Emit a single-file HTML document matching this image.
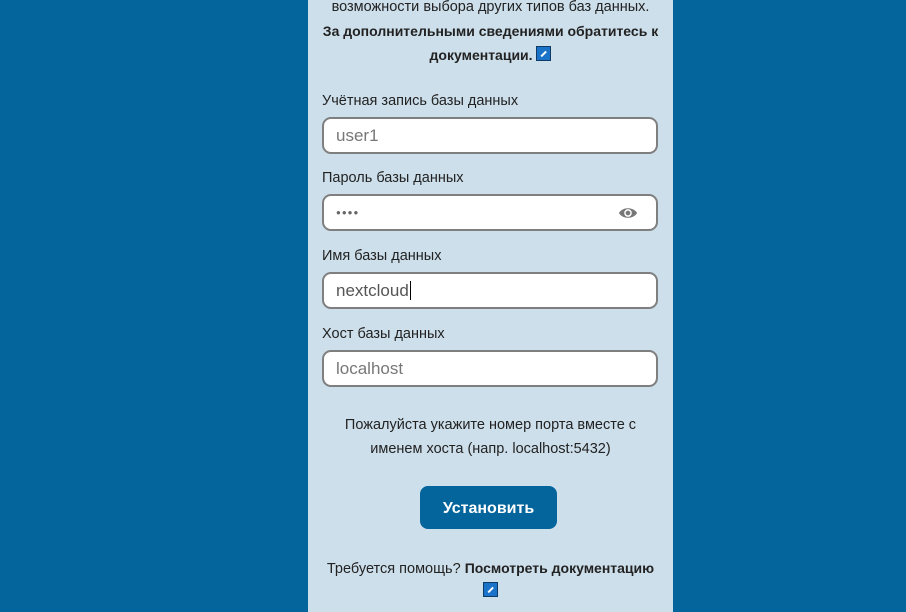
<!DOCTYPE html>
<html><head><meta charset="utf-8"><style>
body{margin:0;width:906px;height:612px;background:#03659c;overflow:hidden;font-family:"Liberation Sans","Noto Sans CJK SC",sans-serif;font-size:14.5px;color:#222}
.p{position:absolute;left:308px;top:0;width:365px;height:612px;background:#cddfeb}
.t{position:absolute;left:0;width:365px;text-align:center;line-height:24px}
.b{font-weight:bold;font-size:14px}
.l{position:absolute;left:14px;font-size:14.5px}
.i{position:absolute;left:14px;height:33px;background:#fff;border:2px solid #7f7f7f;border-radius:9px;box-sizing:content-box;font-size:17px;color:#777;line-height:33px;padding-left:12px;width:320px}
.ic{display:inline-block;width:13px;height:13px;background:#1a73c9;border:1px solid #0d3b66;vertical-align:-1px;position:relative}
.ic:after{content:"";position:absolute;left:3px;top:6px;width:7px;height:1.5px;background:#fff;transform:rotate(-45deg)}
.btn{position:absolute;left:112px;top:486px;width:137px;height:43px;background:#03659c;border-radius:8px;color:#fff;font-weight:bold;font-size:16px;text-align:center;line-height:45px}
</style></head><body><div class="p">
<div class="t" style="top:-5px">возможности выбора других типов баз данных.</div>
<div class="t b" style="top:19px">За дополнительными сведениями обратитесь к</div>
<div class="t b" style="top:43px">документации. <span class="ic"></span></div>
<div class="l" style="top:93px">Учётная запись базы данных</div>
<div class="i" style="top:117px">user1</div>
<div class="l" style="top:170px">Пароль базы данных</div>
<div class="i" style="top:194px;color:#666;font-size:8px;letter-spacing:1px">●●●●
<svg style="position:absolute;right:18px;top:10px" width="20" height="14" viewBox="0 0 22 14"><path d="M1 7C5 0 17 0 21 7C17 14 5 14 1 7Z" fill="#777"/><circle cx="11" cy="7" r="4.2" fill="#fff"/><circle cx="11" cy="7" r="2.6" fill="#777"/></svg></div>
<div class="l" style="top:248px">Имя базы данных</div>
<div class="i" style="top:272px;color:#555">nextcloud<span style="border-left:1px solid #000;margin-left:1px"></span></div>
<div class="l" style="top:326px">Хост базы данных</div>
<div class="i" style="top:350px">localhost</div>
<div class="t" style="top:413px">Пожалуйста укажите номер порта вместе с</div>
<div class="t" style="top:437px">именем хоста (напр. localhost:5432)</div>
<div class="btn">Установить</div>
<div class="t" style="top:556px">Требуется помощь? <span class="b">Посмотреть документацию</span></div>
<div class="t" style="top:580px"><span class="ic"></span></div>
</div></body></html>
